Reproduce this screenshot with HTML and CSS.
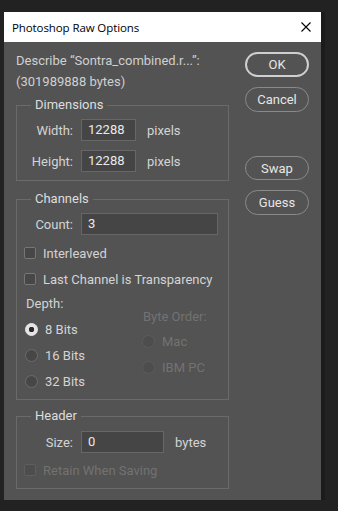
FILE: index.html
```html
<!DOCTYPE html>
<html lang="en">
<head>
  <meta charset="UTF-8" />
  <meta name="viewport" content="width=device-width, initial-scale=1.0" />
  <title>Photoshop Raw Options</title>
  <link rel="stylesheet" href="styles.css">
</head>
<body>
  <div class="dialog">
    <div class="titlebar">
      <span class="title">Photoshop Raw Options</span>
      <svg class="close" width="10" height="10" viewBox="0 0 10 10">
        <path d="M0.5 0.5 L9.5 9.5 M9.5 0.5 L0.5 9.5" stroke="#000" stroke-width="1.1" fill="none" />
      </svg>
    </div>
    <div class="content">
      <div class="main">
        <p class="describe">Describe “Sontra_combined.r...”:<br>(301989888 bytes)</p>

        <fieldset class="group dims">
          <legend>Dimensions</legend>
          <div class="field">
            <span class="label">Width:</span>
            <span class="input w-small">12288</span>
            <span class="unit">pixels</span>
          </div>
          <div class="field">
            <span class="label">Height:</span>
            <span class="input w-small">12288</span>
            <span class="unit">pixels</span>
          </div>
        </fieldset>

        <fieldset class="group channels">
          <legend>Channels</legend>
          <div class="field">
            <span class="label">Count:</span>
            <span class="input w-wide">3</span>
          </div>
          <div class="check-row"><span class="checkbox"></span><span>Interleaved</span></div>
          <div class="check-row"><span class="checkbox"></span><span>Last Channel is Transparency</span></div>
          <div class="depth">
            <div class="depth-col">
              <div class="sub-label">Depth:</div>
              <div class="radio-row"><span class="radio checked"></span><span>8 Bits</span></div>
              <div class="radio-row"><span class="radio"></span><span>16 Bits</span></div>
              <div class="radio-row"><span class="radio"></span><span>32 Bits</span></div>
            </div>
            <div class="order-col disabled">
              <div class="sub-label">Byte Order:</div>
              <div class="radio-row"><span class="radio"></span><span>Mac</span></div>
              <div class="radio-row"><span class="radio"></span><span>IBM PC</span></div>
            </div>
          </div>
        </fieldset>

        <fieldset class="group header">
          <legend>Header</legend>
          <div class="field">
            <span class="label">Size:</span>
            <span class="input w-mid">0</span>
            <span class="unit">bytes</span>
          </div>
          <div class="check-row retain disabled"><span class="checkbox"></span><span>Retain When Saving</span></div>
        </fieldset>
      </div>

      <div class="buttons">
        <button class="btn default">OK</button>
        <button class="btn">Cancel</button>
        <button class="btn swap">Swap</button>
        <button class="btn">Guess</button>
      </div>
    </div>
  </div>
</body>
</html>
```

FILE: styles.css
```css
body {
  margin: 0;
  padding: 12px 0 0 4px;
  background-color: #222222;
  font-family: Roboto, "Open Sans", sans-serif;
  font-size: 13px;
  color: #d4d4d4;
}
.dialog {
  width: 317px;
  height: 488px;
  background-color: #535353;
  box-shadow: 4px 0 0 #1b1b1b;
}
.titlebar {
  height: 30px;
  background-color: #ffffff;
  display: flex;
  align-items: center;
  justify-content: space-between;
  padding: 0 10px 0 8px;
}
.title {
  font-family: "Open Sans", sans-serif;
  font-size: 11.5px;
  letter-spacing: -0.1px;
  color: #000;
}
.content {
  display: flex;
  padding: 8px 0 0 12px;
}
.main {
  width: 213px;
}
.describe {
  margin: 0;
  line-height: 21px;
  color: #d0d0d0;
}
.group {
  margin: 5px 0 0 0;
  padding: 6px 0 8px 0;
  border: 1px solid #6a6a6a;
  min-width: 0;
}
.group legend {
  margin-left: 14px;
  padding: 0 4px;
  line-height: 16px;
  color: #dedede;
}
.channels {
  margin-top: 10px;
  padding-bottom: 5px;
}
.header {
  margin-top: 8px;
  padding-top: 7px;
  padding-bottom: 6px;
}
.field {
  display: flex;
  align-items: center;
  height: 22px;
}
.field + .field {
  margin-top: 9px;
}
.label {
  width: 56px;
  text-align: right;
  margin-right: 8px;
}
.input {
  box-sizing: border-box;
  height: 22px;
  line-height: 20px;
  padding: 0 6px;
  background-color: #454545;
  border: 1px solid #676767;
  color: #eaeaea;
}
.w-small { width: 55px; }
.w-wide { width: 137px; }
.w-mid { width: 83px; }
.unit {
  margin-left: 11px;
}
.check-row {
  display: flex;
  align-items: center;
  height: 26px;
  padding-left: 7px;
}
.channels .field {
  margin-bottom: 5px;
}
.checkbox {
  box-sizing: border-box;
  width: 12px;
  height: 12px;
  margin-right: 7px;
  border: 1px solid #767676;
  border-radius: 2px;
  background-color: #474747;
}
.depth {
  display: flex;
}
.depth-col {
  width: 117px;
  padding-left: 8px;
}
.sub-label {
  height: 24px;
  line-height: 24px;
  padding-left: 1px;
}
.radio-row {
  display: flex;
  align-items: center;
  height: 26px;
}
.radio {
  box-sizing: border-box;
  width: 13px;
  height: 13px;
  margin-right: 7px;
  border: 1px solid #6c6c6c;
  border-radius: 50%;
  background-color: #474747;
}
.radio.checked {
  background-color: #e4e4e4;
  border-color: #e4e4e4;
  background-image: radial-gradient(circle, #2a2a2a 0, #2a2a2a 2.5px, transparent 3px);
}
.order-col {
  padding-top: 14px;
}
.order-col .sub-label {
  height: 22px;
  line-height: 22px;
}
.disabled {
  color: #727272;
}
.disabled .radio {
  border-color: #5c5c5c;
  background-color: #4d4d4d;
}
.disabled .checkbox {
  border-color: #5e5e5e;
  background-color: #4d4d4d;
}
.retain {
  height: 24px;
  margin-top: 5px;
}
.buttons {
  display: flex;
  flex-direction: column;
  margin-left: 16px;
  padding-top: 2px;
}
.btn {
  box-sizing: border-box;
  width: 64px;
  height: 25px;
  padding: 0;
  border: 1px solid #8a8a8a;
  border-radius: 13px;
  background-color: transparent;
  font-family: Roboto, "Open Sans", sans-serif;
  font-size: 13px;
  color: #e6e6e6;
}
.btn + .btn {
  margin-top: 10px;
}
.btn.default {
  border: 2px solid #cfcfcf;
}
.btn.swap {
  margin-top: 44px;
  height: 24px;
}
```
